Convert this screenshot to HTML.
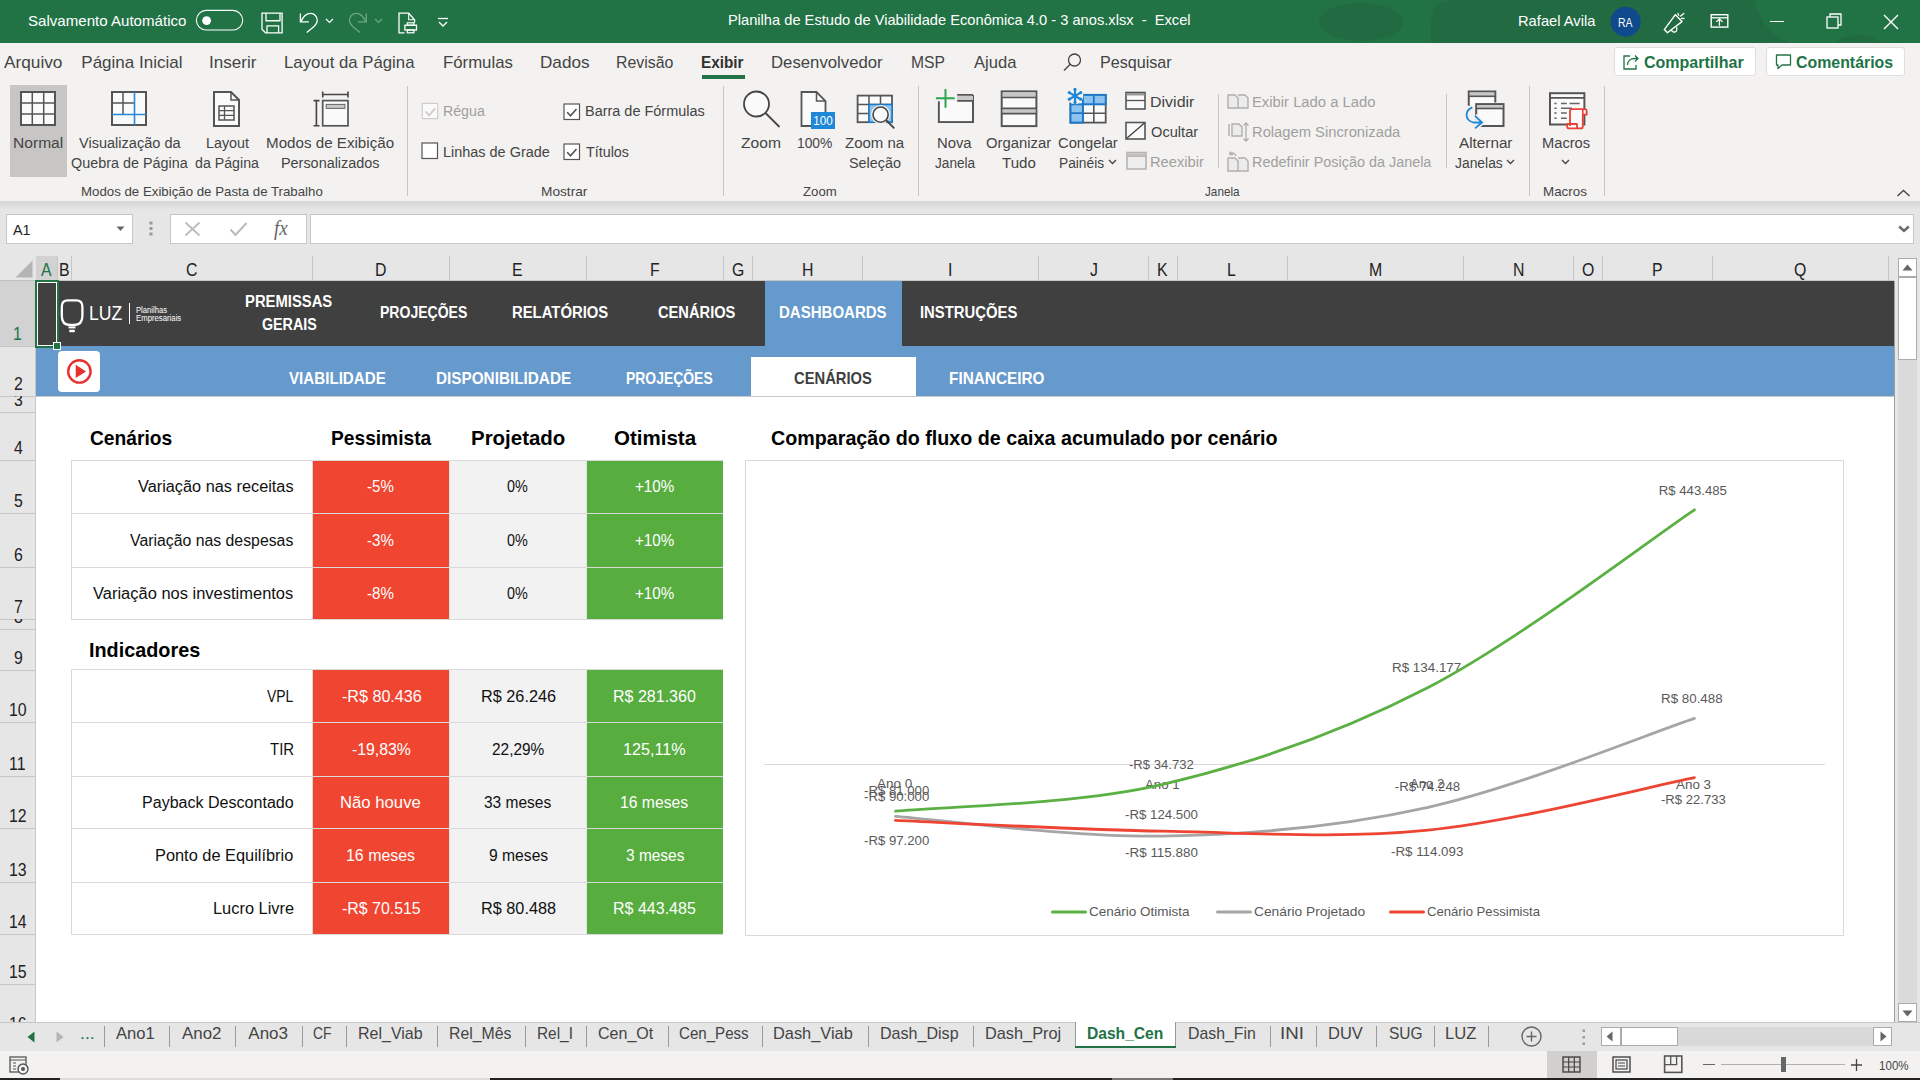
<!DOCTYPE html>
<html><head><meta charset="utf-8"><style>
html,body{margin:0;padding:0;width:1920px;height:1080px;overflow:hidden;background:#fff;}
body{position:relative;font-family:"Liberation Sans",sans-serif;}
.t{position:absolute;white-space:pre;transform-origin:0 0;}
svg{overflow:visible}
</style></head><body>
<div style="position:absolute;left:0px;top:0px;width:1920px;height:43px;background:#217346;"></div>
<svg style="position:absolute;left:0;top:0" width="1920" height="43"><g fill="#226a42"><ellipse cx="1361" cy="22" rx="42" ry="19"/><path d="M1431 43V22Q1431 0 1453 0H1755C1758 18 1768 34 1790 43z"/><ellipse cx="1858" cy="45" rx="22" ry="10"/></g></svg>
<svg style="position:absolute;left:195px;top:9px;" width="50" height="23" viewBox="0 0 50 23"><rect x="1.4" y="1.4" width="46.3" height="19.6" rx="9.8" fill="none" stroke="#fff" stroke-width="1.1"/><circle cx="11.6" cy="11.6" r="4.4" fill="#fff"/></svg>
<svg style="position:absolute;left:261px;top:12px;" width="24" height="24" viewBox="0 0 24 24"><path d="M1 1.2H21.1V20.8H4.5L1 17.3Z" fill="none" stroke="#fff" stroke-width="1.3"/><path d="M5 1.2V8.75H19V1.2M6 20.8V13.8H17.6V20.8" fill="none" stroke="#fff" stroke-width="1.3"/></svg>
<svg style="position:absolute;left:298px;top:12px;" width="24" height="24" viewBox="0 0 24 24"><path d="M2.4 1.4V9.9H10.8" fill="none" stroke="#fff" stroke-width="1.3"/><path d="M3 9.5C5.5 4 9 1.4 12.5 1.4C16.5 1.4 19.3 4.5 19.3 8.5C19.3 11 17.5 13 15.5 15L8.7 20.4" fill="none" stroke="#fff" stroke-width="1.3"/></svg>
<svg style="position:absolute;left:325px;top:17px;" width="10" height="8" viewBox="0 0 10 8"><path d="M1 2l3.5 3.5L8 2" fill="none" stroke="#fff" stroke-width="1.2"/></svg>
<svg style="position:absolute;left:347px;top:12px;" width="24" height="24" viewBox="0 0 24 24"><g opacity="0.35" transform="translate(21.7,0) scale(-1,1)"><path d="M2.4 1.4V9.9H10.8" fill="none" stroke="#fff" stroke-width="1.3"/><path d="M3 9.5C5.5 4 9 1.4 12.5 1.4C16.5 1.4 19.3 4.5 19.3 8.5C19.3 11 17.5 13 15.5 15L8.7 20.4" fill="none" stroke="#fff" stroke-width="1.3"/></g></svg>
<svg style="position:absolute;left:374px;top:17px;" width="10" height="8" viewBox="0 0 10 8"><path d="M1 2l3.5 3.5L8 2" fill="none" stroke="#fff" stroke-width="1.2" opacity="0.35"/></svg>
<svg style="position:absolute;left:397px;top:12px;" width="24" height="24" viewBox="0 0 24 24"><path d="M7.5 20.8H2V1.2H11.7L17.6 7.8V10.6" fill="none" stroke="#fff" stroke-width="1.3"/><path d="M11.7 1.2V7.8H17.6" fill="none" stroke="#fff" stroke-width="1.1"/><rect x="7.9" y="13.2" width="11.6" height="4.8" fill="#217346" stroke="#fff" stroke-width="1.3"/><rect x="10.3" y="10.8" width="6.6" height="2.4" fill="none" stroke="#fff" stroke-width="1.2"/><rect x="10.3" y="18" width="6.6" height="2.8" fill="none" stroke="#fff" stroke-width="1.2"/></svg>
<svg style="position:absolute;left:437px;top:17px;" width="12" height="12" viewBox="0 0 12 12"><path d="M1 1.5h10" stroke="#fff" stroke-width="1.3"/><path d="M2 5l4 4 4-4" fill="none" stroke="#fff" stroke-width="1.3"/></svg>
<svg style="position:absolute;left:1610px;top:6px;" width="32" height="32" viewBox="0 0 32 32"><circle cx="15.7" cy="15.7" r="15" fill="#0e4a8c"/></svg>
<svg style="position:absolute;left:1655px;top:5px;" width="36" height="32" viewBox="0 0 36 32"><path d="M9.3 24.6L20.4 9.7L27 16.6L12.4 27.7z" fill="none" stroke="#fff" stroke-width="1.4" stroke-linejoin="round"/><path d="M16.4 24.6C16.6 27 19.5 27.8 21.2 26.2C21.8 25.5 21.9 23.5 21.7 22.1" fill="none" stroke="#fff" stroke-width="1.3"/><path d="M23 8.4L23.7 10.4M25.7 11L28.8 8.4M26.3 13.3L29 13.5" stroke="#fff" stroke-width="1.3" stroke-linecap="round"/></svg>
<svg style="position:absolute;left:1705px;top:8px;" width="30" height="26" viewBox="0 0 30 26"><rect x="6.2" y="6.7" width="16.6" height="12.4" fill="none" stroke="#fff" stroke-width="1.4"/><path d="M6.2 9.8H22.8" stroke="#fff" stroke-width="1.3"/><path d="M14.4 17.8V10.9M11.3 13.9L14.4 10.8L17.5 13.9" fill="none" stroke="#fff" stroke-width="1.3"/></svg>
<div style="position:absolute;left:1770px;top:21px;width:14px;height:1.3px;background:#fff;"></div>
<svg style="position:absolute;left:1826px;top:13px;" width="18" height="18" viewBox="0 0 18 18"><rect x="1" y="4" width="11" height="11" fill="none" stroke="#fff" stroke-width="1.3"/><path d="M4 4V1h11v11h-3" fill="none" stroke="#fff" stroke-width="1.3"/></svg>
<svg style="position:absolute;left:1883px;top:14px;" width="16" height="16" viewBox="0 0 16 16"><path d="M1 1l14 14M15 1L1 15" stroke="#fff" stroke-width="1.4"/></svg>
<div style="position:absolute;left:0px;top:43px;width:1920px;height:158px;background:#f3f2f1;"></div>
<div style="position:absolute;left:0;top:201px;width:1920px;height:13px;background:linear-gradient(#d6d5d4,#e6e6e6 70%);"></div>
<div style="position:absolute;left:702px;top:75px;width:43px;height:3.6px;background:#217346;"></div>
<svg style="position:absolute;left:1062px;top:52px;" width="22" height="22" viewBox="0 0 22 22"><circle cx="12.5" cy="8" r="6" fill="none" stroke="#444" stroke-width="1.3"/><path d="M8.2 12.3L2 18.5" stroke="#444" stroke-width="1.4"/></svg>
<div style="position:absolute;left:1614px;top:47px;width:142px;height:29px;background:#fff;border:1px solid #e1dfdd;box-sizing:border-box;border-radius:3px;"></div>
<div style="position:absolute;left:1766px;top:47px;width:139px;height:29px;background:#fff;border:1px solid #e1dfdd;box-sizing:border-box;border-radius:3px;"></div>
<svg style="position:absolute;left:1621px;top:52px;" width="20" height="20" viewBox="0 0 20 20"><path d="M9 4H3v13h12v-4" fill="none" stroke="#217346" stroke-width="1.3"/><path d="M6.5 13c0-4 3-6.5 7.5-6.5H17M14 3.5l3 3-3 3" fill="none" stroke="#217346" stroke-width="1.3"/></svg>
<svg style="position:absolute;left:1775px;top:53px;" width="18" height="18" viewBox="0 0 18 18"><path d="M1.5 2h14v10H7l-4 3.5V12H1.5z" fill="none" stroke="#217346" stroke-width="1.3" stroke-linejoin="round"/></svg>
<div style="position:absolute;left:10px;top:85px;width:57px;height:92px;background:#c8c6c4;"></div>
<svg style="position:absolute;left:20px;top:91px;" width="37" height="36" viewBox="0 0 37 36"><rect x="1" y="1" width="34" height="33" fill="#fafafa" stroke="#555" stroke-width="2"/><path d="M12.3 1v33M23.7 1v33M1 12h34M1 23h34" stroke="#555" stroke-width="1.5"/></svg>
<svg style="position:absolute;left:111px;top:91px;" width="37" height="36" viewBox="0 0 37 36"><rect x="1" y="1" width="34" height="33" fill="#fafafa" stroke="#555" stroke-width="2"/><path d="M12 1v22M1 12h22" stroke="#555" stroke-width="1.5"/><path d="M23.5 1v33M1 23.5h34" stroke="#2b88d8" stroke-width="1.6"/></svg>
<svg style="position:absolute;left:213px;top:91px;" width="28" height="36" viewBox="0 0 28 36"><path d="M1 1h17l8 8v26H1z" fill="#fafafa" stroke="#555" stroke-width="2"/><path d="M18 1v8h8" fill="none" stroke="#555" stroke-width="1.5"/><rect x="6" y="15" width="15" height="14" fill="none" stroke="#555" stroke-width="1.5"/><path d="M6 19.7h15M6 24.3h15M11.5 15v14" stroke="#555" stroke-width="1.3"/></svg>
<svg style="position:absolute;left:310px;top:88px;" width="42" height="42" viewBox="0 0 42 42"><path d="M12.7 6.5H38M12.7 3.6V9.5M38 3.6V9.5" stroke="#444" stroke-width="1.6" fill="none"/><path d="M6.4 12.6V37.8M3.5 12.6H9.5M3.5 37.8H9.5" stroke="#444" stroke-width="1.6" fill="none"/><rect x="12.7" y="12.6" width="25.3" height="25.2" fill="#fafafa" stroke="#555" stroke-width="1.7"/><rect x="16.2" y="16.4" width="18.7" height="4" fill="#c8c8c8" stroke="#666" stroke-width="1"/></svg>
<div style="position:absolute;left:407px;top:86px;width:1px;height:110px;background:#c8c6c4;"></div>
<svg style="position:absolute;left:421px;top:102px;" width="18" height="18" viewBox="0 0 18 18"><rect x="1.3" y="1.4" width="15.4" height="15.2" fill="#fafafa" stroke="#cfcdcb" stroke-width="1.2"/><path d="M4.5 9.5L8 13.3L14.3 6.3" fill="none" stroke="#cfcdcb" stroke-width="1.9"/></svg>
<svg style="position:absolute;left:421px;top:142px;" width="18" height="18" viewBox="0 0 18 18"><rect x="1" y="1" width="15.5" height="15.5" fill="#fff" stroke="#555" stroke-width="1.2"/></svg>
<svg style="position:absolute;left:562.5px;top:102.5px;" width="18" height="18" viewBox="0 0 18 18"><rect x="1" y="1" width="15.5" height="15.5" fill="#fff" stroke="#555" stroke-width="1.2"/><path d="M4.2 9.2l3.3 3.6 6-6.8" fill="none" stroke="#555" stroke-width="1.7"/></svg>
<svg style="position:absolute;left:562.5px;top:142.5px;" width="18" height="18" viewBox="0 0 18 18"><rect x="1" y="1" width="15.5" height="15.5" fill="#fff" stroke="#555" stroke-width="1.2"/><path d="M4.2 9.2l3.3 3.6 6-6.8" fill="none" stroke="#555" stroke-width="1.7"/></svg>
<div style="position:absolute;left:723px;top:86px;width:1px;height:110px;background:#c8c6c4;"></div>
<svg style="position:absolute;left:742px;top:90px;" width="40" height="40" viewBox="0 0 40 40"><circle cx="14.5" cy="14" r="12.5" fill="#fafafa" stroke="#444" stroke-width="1.8"/><path d="M23.5 23l14 14" stroke="#444" stroke-width="1.8"/></svg>
<svg style="position:absolute;left:800px;top:91px;" width="38" height="40" viewBox="0 0 38 40"><path d="M1.5 1h15l9 9v25H1.5z" fill="#fafafa" stroke="#555" stroke-width="1.8"/><path d="M16.5 1v9h9" fill="none" stroke="#555" stroke-width="1.5"/><rect x="11" y="21" width="24" height="17" fill="#1e88d8"/><text x="23" y="34.5" font-family="Liberation Sans" font-size="13" fill="#fff" text-anchor="middle" transform="scale(0.9,1) translate(2.5,0)">100</text></svg>
<svg style="position:absolute;left:855px;top:93px;" width="44" height="40" viewBox="0 0 44 40"><rect x="2.6" y="2.6" width="34.4" height="26.6" fill="#fafafa" stroke="#555" stroke-width="1.8"/><path d="M14 2.6V29.2M25.5 2.6V11.5M2.6 11.5H37M2.6 20.5H14" stroke="#555" stroke-width="1.5"/><rect x="14" y="11.5" width="23" height="17.7" fill="#8cc4ef" stroke="#1e78c8" stroke-width="1.5"/><circle cx="25.6" cy="21.6" r="9.6" fill="#f3f2f1"/><circle cx="25.6" cy="21.6" r="7.6" fill="#fafafa" stroke="#444" stroke-width="1.6"/><path d="M31 27L39.3 35.4" stroke="#444" stroke-width="1.8"/></svg>
<div style="position:absolute;left:918px;top:86px;width:1px;height:110px;background:#c8c6c4;"></div>
<svg style="position:absolute;left:930px;top:85px;" width="46" height="40" viewBox="0 0 46 40"><path d="M8.9 16.3V37.1H43V9.9" fill="none" stroke="#555" stroke-width="2"/><rect x="9.9" y="15.8" width="32.1" height="20.3" fill="#fafafa"/><rect x="27.2" y="10.9" width="15.8" height="4.9" fill="#c8c8c8"/><path d="M27.2 9.9H43M27.2 15.8H43" stroke="#555" stroke-width="1.8"/><path d="M15.5 4V22.8M5.9 13.2H24.7" stroke="#2ea44f" stroke-width="2"/></svg>
<svg style="position:absolute;left:998px;top:88px;" width="42" height="40" viewBox="0 0 42 40"><rect x="3.7" y="3.4" width="34.7" height="34.7" fill="#fafafa" stroke="#555" stroke-width="2"/><rect x="4.7" y="4.4" width="32.7" height="5.1" fill="#c8c8c8"/><rect x="4.7" y="20.3" width="32.7" height="5.4" fill="#c8c8c8"/><path d="M3.7 9.5H38.4M3.7 20.3H38.4M3.7 25.7H38.4" stroke="#555" stroke-width="1.7"/></svg>
<svg style="position:absolute;left:1064px;top:86px;" width="46" height="40" viewBox="0 0 46 40"><rect x="6.5" y="8.9" width="35.2" height="27.7" fill="#fafafa" stroke="#555" stroke-width="1.8"/><path d="M29.8 8.9V36.6M18.9 18.3V36.6M6.5 27.2H41.7" stroke="#555" stroke-width="1.6"/><rect x="18.9" y="8.9" width="22.8" height="9.4" fill="#8cc4ef" stroke="#1e78c8" stroke-width="2"/><rect x="6.5" y="18.3" width="12.4" height="18.3" fill="#8cc4ef" stroke="#1e78c8" stroke-width="2"/><path d="M29.8 8.9V18.3M6.5 27.2H18.9" stroke="#1e78c8" stroke-width="1.8"/><circle cx="11" cy="9.9" r="8.3" fill="#f3f2f1"/><g stroke="#1e88d8" stroke-width="2.2" stroke-linecap="round"><path d="M11 3.3V16.5M5.3 6.6L16.7 13.2M16.7 6.6L5.3 13.2"/></g><g fill="#1e88d8"><circle cx="11" cy="3.3" r="1.6"/><circle cx="11" cy="16.5" r="1.6"/><circle cx="5.3" cy="6.6" r="1.6"/><circle cx="16.7" cy="13.2" r="1.6"/><circle cx="16.7" cy="6.6" r="1.6"/><circle cx="5.3" cy="13.2" r="1.6"/></g></svg>
<svg style="position:absolute;left:1125px;top:91px;" width="22" height="20" viewBox="0 0 22 20"><rect x="1" y="1.5" width="19" height="16.5" fill="#fafafa" stroke="#555" stroke-width="1.6"/><rect x="1.5" y="2" width="18" height="2.5" fill="#999"/><path d="M1 9.5h19" stroke="#555" stroke-width="1.3"/></svg>
<svg style="position:absolute;left:1125px;top:121px;" width="22" height="20" viewBox="0 0 22 20"><rect x="1" y="1.5" width="19" height="16.5" fill="#fafafa" stroke="#555" stroke-width="1.6"/><path d="M1.5 17.5L19.5 2" stroke="#444" stroke-width="1.4"/></svg>
<svg style="position:absolute;left:1126px;top:151px;" width="22" height="20" viewBox="0 0 22 20"><rect x="1" y="1.5" width="19" height="16.5" fill="#ededed" stroke="#b5b3b1" stroke-width="1.6"/><rect x="1.8" y="2.3" width="17.4" height="2.6" fill="#c4c2c0"/><path d="M1 5.3H20" stroke="#b5b3b1" stroke-width="1.2"/></svg>
<svg style="position:absolute;left:1108px;top:158px;" width="10" height="8" viewBox="0 0 10 8"><path d="M1 2l3.5 3.5L8 2" fill="none" stroke="#444" stroke-width="1.3"/></svg>
<div style="position:absolute;left:1218px;top:94px;width:1px;height:74px;background:#c8c6c4;"></div>
<svg style="position:absolute;left:1227px;top:93px;" width="24" height="16" viewBox="0 0 24 16"><path d="M1 2h7l3 3v10H1zM11 2h7l3 3v10H11" fill="#ececec" stroke="#b0aeac" stroke-width="1.4"/></svg>
<svg style="position:absolute;left:1227px;top:121px;" width="24" height="22" viewBox="0 0 24 22"><path d="M2 3v12M5 3h7l3 3v9H5z" fill="#ececec" stroke="#b0aeac" stroke-width="1.4"/><path d="M19 2v18M16.5 4.5L19 2l2.5 2.5M16.5 17.5L19 20l2.5-2.5" fill="none" stroke="#b0aeac" stroke-width="1.3"/></svg>
<svg style="position:absolute;left:1227px;top:150px;" width="24" height="22" viewBox="0 0 24 22"><path d="M1 8h7l3 3v10H1zM11 8h7l3 3v10H11" fill="#ececec" stroke="#b0aeac" stroke-width="1.4"/><path d="M9 6c-1-3-4-4-6-2M3 1.5v3h3" fill="none" stroke="#b0aeac" stroke-width="1.3"/></svg>
<div style="position:absolute;left:1446px;top:94px;width:1px;height:74px;background:#c8c6c4;"></div>
<svg style="position:absolute;left:1460px;top:88px;" width="50" height="45" viewBox="0 0 50 45"><path d="M8.75 17.7V3.6H35.3V14.6" fill="#fafafa" stroke="#555" stroke-width="2"/><rect x="9.75" y="4.6" width="24.5" height="3.7" fill="#c8c8c8"/><path d="M8.75 8.3H35.3" stroke="#555" stroke-width="1.6"/><rect x="16.2" y="16.1" width="27.3" height="21.9" fill="#fafafa" stroke="#555" stroke-width="2"/><rect x="17.2" y="17.1" width="25.3" height="3.4" fill="#c8c8c8"/><path d="M16.2 20.5H43.5" stroke="#555" stroke-width="1.6"/><path d="M12.3 19.3C5 22 4 32 13.4 34.5H22M15 27.9L22 34.5L15 40.4" fill="none" stroke="#f3f2f1" stroke-width="5"/><path d="M12.3 19.3C5 22 4 32 13.4 34.5H22M15 27.9L22 34.5L15 40.4" fill="none" stroke="#1e88d8" stroke-width="1.8"/></svg>
<svg style="position:absolute;left:1506px;top:158px;" width="10" height="8" viewBox="0 0 10 8"><path d="M1 2l3.5 3.5L8 2" fill="none" stroke="#444" stroke-width="1.3"/></svg>
<div style="position:absolute;left:1529px;top:86px;width:1px;height:110px;background:#c8c6c4;"></div>
<svg style="position:absolute;left:1545px;top:88px;" width="46" height="44" viewBox="0 0 46 44"><rect x="5" y="5.2" width="34.4" height="31.3" fill="#fafafa" stroke="#555" stroke-width="2"/><path d="M5 9.9H39.4" stroke="#555" stroke-width="1.8"/><g stroke="#666" stroke-width="1.5"><path d="M9.3 15.4H11.6M16 15.4H21.8M24.5 15.4H34.7M9.3 20.2H11.6M16 20.2H27M9.3 25.1H11.6M16 25.1H21.8M9.3 30.2H11.6M16 30.2H21.8"/></g><path d="M25 38V23.2Q25 21.2 27 21.2H39.7Q41.7 21.2 41.7 23.2V26.7H37.8V38.4Q37.8 40.4 35.8 40.4H24.2Q22.2 40.4 22.2 38.4V36H32V40.4" fill="#fafafa" stroke="#e8403a" stroke-width="1.8" stroke-linejoin="round"/><path d="M37.8 21.2V26.7" stroke="#e8403a" stroke-width="1.6"/></svg>
<svg style="position:absolute;left:1561px;top:158px;" width="10" height="8" viewBox="0 0 10 8"><path d="M1 2l3.5 3.5L8 2" fill="none" stroke="#444" stroke-width="1.3"/></svg>
<div style="position:absolute;left:1604px;top:86px;width:1px;height:110px;background:#c8c6c4;"></div>
<svg style="position:absolute;left:1896px;top:188px;" width="16" height="10" viewBox="0 0 16 10"><path d="M1.5 8l6-5.5 6 5.5" fill="none" stroke="#444" stroke-width="1.3"/></svg>
<div style="position:absolute;left:0px;top:214px;width:1920px;height:67px;background:#e6e6e6;"></div>
<div style="position:absolute;left:6px;top:214px;width:127px;height:30px;background:#fff;border:1px solid #c6c6c6;box-sizing:border-box;"></div>
<svg style="position:absolute;left:116px;top:226px;" width="10" height="6" viewBox="0 0 10 6"><path d="M0.5 0.5h8l-4 4.5z" fill="#666"/></svg>
<svg style="position:absolute;left:149px;top:221px;" width="5" height="16" viewBox="0 0 5 16"><rect x="0.5" y="0.5" width="3" height="3" fill="#999"/><rect x="0.5" y="6" width="3" height="3" fill="#999"/><rect x="0.5" y="11.5" width="3" height="3" fill="#999"/></svg>
<div style="position:absolute;left:170px;top:214px;width:137px;height:30px;background:#fff;border:1px solid #c6c6c6;box-sizing:border-box;"></div>
<svg style="position:absolute;left:184px;top:221px;" width="18" height="16" viewBox="0 0 18 16"><path d="M1.5 1.5l14 13M15.5 1.5l-14 13" stroke="#bbb" stroke-width="1.8"/></svg>
<svg style="position:absolute;left:229px;top:221px;" width="19" height="16" viewBox="0 0 19 16"><path d="M1.5 8.5l5 5.5L17.5 2" fill="none" stroke="#bbb" stroke-width="2"/></svg>
<div style="position:absolute;left:274px;top:216px;font-family:'Liberation Serif',serif;font-style:italic;font-size:20px;line-height:24px;color:#666;transform:scaleX(0.95);transform-origin:0 0;">fx</div>
<div style="position:absolute;left:310px;top:214px;width:1604px;height:30px;background:#fff;border:1px solid #c6c6c6;box-sizing:border-box;"></div>
<svg style="position:absolute;left:1897px;top:224px;" width="14" height="10" viewBox="0 0 14 10"><path d="M2.2 2.5l4.8 4.3 4.8-4.3" fill="none" stroke="#666" stroke-width="2.4"/></svg>
<div style="position:absolute;left:36px;top:256px;width:22px;height:25px;background:#d2d2d2;"></div>
<svg style="position:absolute;left:14px;top:259px;" width="20" height="20" viewBox="0 0 20 20"><path d="M18.5 1.5V18.5H1.5z" fill="#b4b4b4"/></svg>
<div style="position:absolute;left:57px;top:256px;width:1px;height:25px;background:#c6c6c6;"></div>
<div style="position:absolute;left:71px;top:256px;width:1px;height:25px;background:#c6c6c6;"></div>
<div style="position:absolute;left:312px;top:256px;width:1px;height:25px;background:#c6c6c6;"></div>
<div style="position:absolute;left:449px;top:256px;width:1px;height:25px;background:#c6c6c6;"></div>
<div style="position:absolute;left:586px;top:256px;width:1px;height:25px;background:#c6c6c6;"></div>
<div style="position:absolute;left:723px;top:256px;width:1px;height:25px;background:#c6c6c6;"></div>
<div style="position:absolute;left:752px;top:256px;width:1px;height:25px;background:#c6c6c6;"></div>
<div style="position:absolute;left:862px;top:256px;width:1px;height:25px;background:#c6c6c6;"></div>
<div style="position:absolute;left:1038px;top:256px;width:1px;height:25px;background:#c6c6c6;"></div>
<div style="position:absolute;left:1148px;top:256px;width:1px;height:25px;background:#c6c6c6;"></div>
<div style="position:absolute;left:1177px;top:256px;width:1px;height:25px;background:#c6c6c6;"></div>
<div style="position:absolute;left:1287px;top:256px;width:1px;height:25px;background:#c6c6c6;"></div>
<div style="position:absolute;left:1463px;top:256px;width:1px;height:25px;background:#c6c6c6;"></div>
<div style="position:absolute;left:1573px;top:256px;width:1px;height:25px;background:#c6c6c6;"></div>
<div style="position:absolute;left:1602px;top:256px;width:1px;height:25px;background:#c6c6c6;"></div>
<div style="position:absolute;left:1712px;top:256px;width:1px;height:25px;background:#c6c6c6;"></div>
<div style="position:absolute;left:1888px;top:256px;width:1px;height:25px;background:#c6c6c6;"></div>
<div style="position:absolute;left:36px;top:280px;width:1858px;height:1px;background:#c6c6c6;"></div>
<div style="position:absolute;left:0px;top:256px;width:36px;height:1px;background:#e6e6e6;"></div>
<div style="position:absolute;left:0px;top:281px;width:36px;height:741px;background:#e6e6e6;"></div>
<div style="position:absolute;left:0px;top:281px;width:36px;height:65px;background:#d2d2d2;"></div>
<div style="position:absolute;left:0px;top:346px;width:36px;height:1px;background:#c6c6c6;"></div>
<div style="position:absolute;left:0px;top:396px;width:36px;height:1px;background:#c6c6c6;"></div>
<div style="position:absolute;left:0px;top:412px;width:36px;height:1px;background:#c6c6c6;"></div>
<div style="position:absolute;left:0px;top:460px;width:36px;height:1px;background:#c6c6c6;"></div>
<div style="position:absolute;left:0px;top:513px;width:36px;height:1px;background:#c6c6c6;"></div>
<div style="position:absolute;left:0px;top:567px;width:36px;height:1px;background:#c6c6c6;"></div>
<div style="position:absolute;left:0px;top:619px;width:36px;height:1px;background:#c6c6c6;"></div>
<div style="position:absolute;left:0px;top:629px;width:36px;height:1px;background:#c6c6c6;"></div>
<div style="position:absolute;left:0px;top:670px;width:36px;height:1px;background:#c6c6c6;"></div>
<div style="position:absolute;left:0px;top:722px;width:36px;height:1px;background:#c6c6c6;"></div>
<div style="position:absolute;left:0px;top:776px;width:36px;height:1px;background:#c6c6c6;"></div>
<div style="position:absolute;left:0px;top:828px;width:36px;height:1px;background:#c6c6c6;"></div>
<div style="position:absolute;left:0px;top:882px;width:36px;height:1px;background:#c6c6c6;"></div>
<div style="position:absolute;left:0px;top:934px;width:36px;height:1px;background:#c6c6c6;"></div>
<div style="position:absolute;left:0px;top:984px;width:36px;height:1px;background:#c6c6c6;"></div>
<div style="position:absolute;left:35px;top:281px;width:1px;height:741px;background:#c6c6c6;"></div>
<div style="position:absolute;left:0px;top:280px;width:36px;height:1px;background:#c0c0c0;"></div>
<div style="position:absolute;left:36px;top:281px;width:1858px;height:741px;background:#ffffff;"></div>
<div style="position:absolute;left:36px;top:281px;width:1858px;height:65px;background:#404040;"></div>
<div style="position:absolute;left:765px;top:281px;width:137px;height:65px;background:#6699cc;"></div>
<div style="position:absolute;left:36px;top:346px;width:1858px;height:50px;background:#6699cc;"></div>
<div style="position:absolute;left:36px;top:396px;width:1858px;height:1px;background:#c8c8c8;"></div>
<div style="position:absolute;left:751px;top:357px;width:165px;height:39px;background:#ffffff;"></div>
<div style="position:absolute;left:1894px;top:281px;width:1px;height:741px;background:#a0a0a0;"></div>
<div style="position:absolute;left:0px;top:1022px;width:1920px;height:1px;background:#c6c6c6;"></div>
<div style="position:absolute;left:35px;top:280px;width:24px;height:68px;border:2px solid #217346;box-sizing:border-box;"></div><div style="position:absolute;left:37px;top:282px;width:20px;height:64px;border:1px solid #fff;box-sizing:border-box;"></div>
<div style="position:absolute;left:54px;top:343px;width:6px;height:6px;background:#217346;outline:1px solid #fff;"></div>
<svg style="position:absolute;left:58px;top:296px;" width="30" height="40" viewBox="0 0 30 40"><path d="M18 4.3H10Q3.8 4.3 3.8 10.5V20Q3.8 29 12 29H16Q24.4 29 24.4 20V10.5Q24.4 4.3 18 4.3z" fill="none" stroke="#fff" stroke-width="2.3"/><path d="M10.5 31.4H17.5" stroke="#fff" stroke-width="2"/><path d="M12.3 35H15.8" stroke="#fff" stroke-width="2.4" stroke-linecap="round"/></svg>
<div style="position:absolute;left:129px;top:303px;width:1px;height:21px;background:#ffffff;"></div>
<div style="position:absolute;left:58px;top:351px;width:42px;height:41px;background:#ffffff;border-radius:4px;"></div>
<svg style="position:absolute;left:64px;top:357px;" width="30" height="30" viewBox="0 0 30 30"><circle cx="15.4" cy="14.4" r="11.2" fill="none" stroke="#e8312f" stroke-width="2.4"/><path d="M11.75 7.8V21L22 14.4z" fill="#e8312f"/></svg>
<div style="position:absolute;left:71px;top:460px;width:242px;height:159px;background:#fff;"></div>
<div style="position:absolute;left:313px;top:460px;width:136px;height:159px;background:#ef4531;"></div>
<div style="position:absolute;left:449px;top:460px;width:138px;height:159px;background:#f2f2f2;"></div>
<div style="position:absolute;left:587px;top:460px;width:136px;height:159px;background:#58ad3f;"></div>
<div style="position:absolute;left:71px;top:460px;width:652px;height:1px;background:#d9d9d9;"></div>
<div style="position:absolute;left:71px;top:513px;width:652px;height:1px;background:#d9d9d9;"></div>
<div style="position:absolute;left:71px;top:567px;width:652px;height:1px;background:#d9d9d9;"></div>
<div style="position:absolute;left:71px;top:619px;width:652px;height:1px;background:#d9d9d9;"></div>
<div style="position:absolute;left:71px;top:460px;width:1px;height:160px;background:#d9d9d9;"></div>
<div style="position:absolute;left:312px;top:460px;width:1px;height:159px;background:#d9d9d9;"></div>
<div style="position:absolute;left:449px;top:460px;width:1px;height:159px;background:#e4e4e4;"></div>
<div style="position:absolute;left:586px;top:460px;width:1px;height:159px;background:#e4e4e4;"></div>
<div style="position:absolute;left:71px;top:669px;width:242px;height:265px;background:#fff;"></div>
<div style="position:absolute;left:313px;top:669px;width:136px;height:265px;background:#ef4531;"></div>
<div style="position:absolute;left:449px;top:669px;width:138px;height:265px;background:#f2f2f2;"></div>
<div style="position:absolute;left:587px;top:669px;width:136px;height:265px;background:#58ad3f;"></div>
<div style="position:absolute;left:71px;top:669px;width:652px;height:1px;background:#d9d9d9;"></div>
<div style="position:absolute;left:71px;top:722px;width:652px;height:1px;background:#d9d9d9;"></div>
<div style="position:absolute;left:71px;top:776px;width:652px;height:1px;background:#d9d9d9;"></div>
<div style="position:absolute;left:71px;top:828px;width:652px;height:1px;background:#d9d9d9;"></div>
<div style="position:absolute;left:71px;top:882px;width:652px;height:1px;background:#d9d9d9;"></div>
<div style="position:absolute;left:71px;top:934px;width:652px;height:1px;background:#d9d9d9;"></div>
<div style="position:absolute;left:71px;top:669px;width:1px;height:266px;background:#d9d9d9;"></div>
<div style="position:absolute;left:312px;top:669px;width:1px;height:265px;background:#d9d9d9;"></div>
<div style="position:absolute;left:449px;top:669px;width:1px;height:265px;background:#e4e4e4;"></div>
<div style="position:absolute;left:586px;top:669px;width:1px;height:265px;background:#e4e4e4;"></div>
<div style="position:absolute;left:745px;top:460px;width:1099px;height:476px;background:#fff;border:1px solid #d9d9d9;box-sizing:border-box;"></div>
<div style="position:absolute;left:764px;top:764px;width:1061px;height:1px;background:#d9d9d9;"></div>
<svg style="position:absolute;left:1050px;top:909px;" width="40" height="6" viewBox="0 0 40 6"><path d="M2.5 3h33" stroke="#5bb043" stroke-width="3" stroke-linecap="round"/></svg>
<svg style="position:absolute;left:1215px;top:909px;" width="40" height="6" viewBox="0 0 40 6"><path d="M2.5 3h33" stroke="#a5a5a5" stroke-width="3" stroke-linecap="round"/></svg>
<svg style="position:absolute;left:1388px;top:909px;" width="40" height="6" viewBox="0 0 40 6"><path d="M2.5 3h33" stroke="#ee4433" stroke-width="3" stroke-linecap="round"/></svg>
<div style="position:absolute;left:1895px;top:256px;width:25px;height:766px;background:#e6e6e6;"></div>
<div style="position:absolute;left:1898px;top:258px;width:19px;height:19px;background:#fff;border:1px solid #ababab;box-sizing:border-box;"></div>
<svg style="position:absolute;left:1902px;top:264px;" width="11" height="7" viewBox="0 0 11 7"><path d="M0.5 6.5L5.5 0.5l5 6z" fill="#666"/></svg>
<div style="position:absolute;left:1898px;top:277px;width:19px;height:83px;background:#fff;border:1px solid #ababab;box-sizing:border-box;"></div>
<div style="position:absolute;left:1898px;top:360px;width:19px;height:643px;background:#dadada;"></div>
<div style="position:absolute;left:1898px;top:1003px;width:19px;height:19px;background:#fff;border:1px solid #ababab;box-sizing:border-box;"></div>
<svg style="position:absolute;left:1902px;top:1010px;" width="11" height="7" viewBox="0 0 11 7"><path d="M0.5 0.5h10l-5 6z" fill="#666"/></svg>
<div style="position:absolute;left:0px;top:1023px;width:1920px;height:28px;background:#e6e6e6;"></div>
<svg style="position:absolute;left:26px;top:1030px;" width="10" height="14" viewBox="0 0 10 14"><path d="M8.5 1.5v11L1.5 7z" fill="#217346"/></svg>
<svg style="position:absolute;left:55px;top:1030px;" width="10" height="14" viewBox="0 0 10 14"><path d="M1.5 1.5v11L8.5 7z" fill="#b5b5b5"/></svg>
<div style="position:absolute;left:104px;top:1026px;width:1px;height:21px;background:#9a9a9a;"></div>
<div style="position:absolute;left:169px;top:1026px;width:1px;height:21px;background:#9a9a9a;"></div>
<div style="position:absolute;left:235px;top:1026px;width:1px;height:21px;background:#9a9a9a;"></div>
<div style="position:absolute;left:302px;top:1026px;width:1px;height:21px;background:#9a9a9a;"></div>
<div style="position:absolute;left:346px;top:1026px;width:1px;height:21px;background:#9a9a9a;"></div>
<div style="position:absolute;left:437px;top:1026px;width:1px;height:21px;background:#9a9a9a;"></div>
<div style="position:absolute;left:525px;top:1026px;width:1px;height:21px;background:#9a9a9a;"></div>
<div style="position:absolute;left:586px;top:1026px;width:1px;height:21px;background:#9a9a9a;"></div>
<div style="position:absolute;left:668px;top:1026px;width:1px;height:21px;background:#9a9a9a;"></div>
<div style="position:absolute;left:762px;top:1026px;width:1px;height:21px;background:#9a9a9a;"></div>
<div style="position:absolute;left:868px;top:1026px;width:1px;height:21px;background:#9a9a9a;"></div>
<div style="position:absolute;left:973px;top:1026px;width:1px;height:21px;background:#9a9a9a;"></div>
<div style="position:absolute;left:1270px;top:1026px;width:1px;height:21px;background:#9a9a9a;"></div>
<div style="position:absolute;left:1316px;top:1026px;width:1px;height:21px;background:#9a9a9a;"></div>
<div style="position:absolute;left:1376px;top:1026px;width:1px;height:21px;background:#9a9a9a;"></div>
<div style="position:absolute;left:1434px;top:1026px;width:1px;height:21px;background:#9a9a9a;"></div>
<div style="position:absolute;left:1488px;top:1026px;width:1px;height:21px;background:#9a9a9a;"></div>
<div style="position:absolute;left:1075px;top:1022px;width:101px;height:26px;background:#ffffff;border-left:1px solid #9a9a9a;border-right:1px solid #9a9a9a;box-sizing:border-box;"></div>
<div style="position:absolute;left:1075px;top:1046px;width:101px;height:2.2px;background:#217346;"></div>
<svg style="position:absolute;left:1521px;top:1026px;" width="22" height="22" viewBox="0 0 22 22"><circle cx="10.5" cy="10.5" r="9.5" fill="none" stroke="#666" stroke-width="1.4"/><path d="M10.5 5.5v10M5.5 10.5h10" stroke="#666" stroke-width="1.4"/></svg>
<svg style="position:absolute;left:1582px;top:1029px;" width="4" height="18" viewBox="0 0 4 18"><rect x="0.5" y="0.5" width="2.5" height="2.5" fill="#999"/><rect x="0.5" y="7" width="2.5" height="2.5" fill="#999"/><rect x="0.5" y="13.5" width="2.5" height="2.5" fill="#999"/></svg>
<div style="position:absolute;left:1601px;top:1027px;width:291px;height:19px;background:#d9d9d9;"></div>
<div style="position:absolute;left:1601px;top:1027px;width:20px;height:19px;background:#fff;border:1px solid #ababab;box-sizing:border-box;"></div>
<svg style="position:absolute;left:1606px;top:1031px;" width="8" height="11" viewBox="0 0 8 11"><path d="M6.5 0.5v10L0.5 5.5z" fill="#666"/></svg>
<div style="position:absolute;left:1621px;top:1027px;width:57px;height:19px;background:#fff;border:1px solid #ababab;box-sizing:border-box;"></div>
<div style="position:absolute;left:1873px;top:1027px;width:19px;height:19px;background:#fff;border:1px solid #ababab;box-sizing:border-box;"></div>
<svg style="position:absolute;left:1880px;top:1031px;" width="8" height="11" viewBox="0 0 8 11"><path d="M0.5 0.5v10l6-5z" fill="#666"/></svg>
<div style="position:absolute;left:0px;top:1051px;width:1920px;height:29px;background:#f3f2f1;"></div>
<svg style="position:absolute;left:9px;top:1056px;" width="22" height="20" viewBox="0 0 22 20"><rect x="1" y="1" width="16" height="15" fill="none" stroke="#555" stroke-width="1.3"/><path d="M1 4h16M4 7h3M4 10h3M4 13h3" stroke="#555" stroke-width="1.2"/><circle cx="14" cy="13" r="5" fill="#f3f2f1" stroke="#555" stroke-width="1.4"/><circle cx="14" cy="13" r="2" fill="#555"/></svg>
<div style="position:absolute;left:1547px;top:1051px;width:50px;height:27px;background:#d2d0ce;"></div>
<svg style="position:absolute;left:1562px;top:1056px;" width="20" height="18" viewBox="0 0 20 18"><rect x="1" y="1" width="17" height="15" fill="none" stroke="#444" stroke-width="1.4"/><path d="M1 6h17M1 11h17M6.7 1v15M12.3 1v15" stroke="#444" stroke-width="1.2"/></svg>
<svg style="position:absolute;left:1612px;top:1056px;" width="20" height="18" viewBox="0 0 20 18"><rect x="1" y="1" width="17" height="15" fill="none" stroke="#444" stroke-width="1.4"/><rect x="4" y="4" width="11" height="9" fill="none" stroke="#444" stroke-width="1.2"/><path d="M6 7h7M6 10h7" stroke="#444" stroke-width="1"/></svg>
<svg style="position:absolute;left:1662px;top:1054px;" width="22" height="22" viewBox="0 0 22 22"><rect x="2.6" y="2" width="17.2" height="16.4" fill="none" stroke="#555" stroke-width="1.6"/><path d="M2.6 10.6H14.6V2M8.7 2V10.6" fill="none" stroke="#555" stroke-width="1.3"/></svg>
<div style="position:absolute;left:1703px;top:1064px;width:12px;height:1px;background:#666;"></div>
<div style="position:absolute;left:1721px;top:1064px;width:124px;height:1px;background:#b0b0b0;"></div>
<div style="position:absolute;left:1781px;top:1057px;width:5px;height:15px;background:#666;"></div>
<svg style="position:absolute;left:1850px;top:1058px;" width="14" height="14" viewBox="0 0 14 14"><path d="M6.5 1v12M1 7h11" stroke="#444" stroke-width="1.3"/></svg>
<div style="position:absolute;left:0px;top:1078px;width:60px;height:2px;background:#222;"></div>
<div style="position:absolute;left:60px;top:1078px;width:430px;height:2px;background:#ddd;"></div>
<div style="position:absolute;left:490px;top:1078px;width:622px;height:2px;background:#222;"></div>
<div style="position:absolute;left:1112px;top:1078px;width:61px;height:2px;background:#777;"></div>
<div style="position:absolute;left:1173px;top:1078px;width:747px;height:2px;background:#222;"></div>
<div class="t" style="left:28.00px;top:13.67px;font-size:14.8px;line-height:14.8px;font-weight:400;color:#ffffff;transform:scaleX(1.0190);">Salvamento Automático</div>
<div class="t" style="left:727.71px;top:12.87px;font-size:14.8px;line-height:14.8px;font-weight:400;color:#ffffff;transform:scaleX(0.9907);">Planilha de Estudo de Viabilidade Econômica 4.0 - 3 anos.xlsx  -  Excel</div>
<div class="t" style="left:1518.01px;top:14.07px;font-size:14.8px;line-height:14.8px;font-weight:400;color:#ffffff;transform:scaleX(0.9942);">Rafael Avila</div>
<div class="t" style="left:1618.19px;top:15.60px;font-size:13px;line-height:13px;font-weight:400;color:#ffffff;transform:scaleX(0.8051);">RA</div>
<div class="t" style="left:4.30px;top:53.71px;font-size:17px;line-height:17px;font-weight:400;color:#444444;transform:scaleX(1.0142);">Arquivo</div>
<div class="t" style="left:81.30px;top:53.71px;font-size:17px;line-height:17px;font-weight:400;color:#444444;">Página Inicial</div>
<div class="t" style="left:209.00px;top:53.71px;font-size:17px;line-height:17px;font-weight:400;color:#444444;transform:scaleX(1.0028);">Inserir</div>
<div class="t" style="left:284.01px;top:53.71px;font-size:17px;line-height:17px;font-weight:400;color:#444444;transform:scaleX(0.9858);">Layout da Página</div>
<div class="t" style="left:443.31px;top:53.71px;font-size:17px;line-height:17px;font-weight:400;color:#444444;transform:scaleX(0.9863);">Fórmulas</div>
<div class="t" style="left:539.99px;top:53.71px;font-size:17px;line-height:17px;font-weight:400;color:#444444;transform:scaleX(1.0075);">Dados</div>
<div class="t" style="left:616.37px;top:53.71px;font-size:17px;line-height:17px;font-weight:400;color:#444444;transform:scaleX(0.9339);">Revisão</div>
<div class="t" style="left:771.32px;top:53.71px;font-size:17px;line-height:17px;font-weight:400;color:#444444;transform:scaleX(0.9846);">Desenvolvedor</div>
<div class="t" style="left:911.38px;top:53.71px;font-size:17px;line-height:17px;font-weight:400;color:#444444;transform:scaleX(0.9211);">MSP</div>
<div class="t" style="left:974.30px;top:53.71px;font-size:17px;line-height:17px;font-weight:400;color:#444444;transform:scaleX(0.9767);">Ajuda</div>
<div class="t" style="left:1099.75px;top:53.71px;font-size:17px;line-height:17px;font-weight:400;color:#444444;transform:scaleX(0.9475);">Pesquisar</div>
<div class="t" style="left:701.40px;top:53.71px;font-size:17px;line-height:17px;font-weight:700;color:#323130;transform:scaleX(0.9008);">Exibir</div>
<div class="t" style="left:1644.30px;top:53.61px;font-size:17px;line-height:17px;font-weight:700;color:#217346;transform:scaleX(0.9418);">Compartilhar</div>
<div class="t" style="left:1796.00px;top:53.61px;font-size:17px;line-height:17px;font-weight:700;color:#217346;transform:scaleX(0.9347);">Comentários</div>
<div class="t" style="left:12.59px;top:135.48px;font-size:15.5px;line-height:15.5px;font-weight:400;color:#444444;transform:scaleX(1.0060);">Normal</div>
<div class="t" style="left:78.60px;top:135.48px;font-size:15.5px;line-height:15.5px;font-weight:400;color:#444444;transform:scaleX(0.9377);">Visualização da</div>
<div class="t" style="left:70.50px;top:155.48px;font-size:15.5px;line-height:15.5px;font-weight:400;color:#444444;transform:scaleX(0.9271);">Quebra de Página</div>
<div class="t" style="left:205.88px;top:135.48px;font-size:15.5px;line-height:15.5px;font-weight:400;color:#444444;transform:scaleX(0.9236);">Layout</div>
<div class="t" style="left:195.40px;top:155.48px;font-size:15.5px;line-height:15.5px;font-weight:400;color:#444444;transform:scaleX(0.9161);">da Página</div>
<div class="t" style="left:266.42px;top:135.48px;font-size:15.5px;line-height:15.5px;font-weight:400;color:#444444;transform:scaleX(0.9780);">Modos de Exibição</div>
<div class="t" style="left:281.37px;top:155.48px;font-size:15.5px;line-height:15.5px;font-weight:400;color:#444444;transform:scaleX(0.9294);">Personalizados</div>
<div class="t" style="left:80.99px;top:184.73px;font-size:13.2px;line-height:13.2px;font-weight:400;color:#444444;transform:scaleX(1.0056);">Modos de Exibição de Pasta de Trabalho</div>
<div class="t" style="left:443.39px;top:103.48px;font-size:15.5px;line-height:15.5px;font-weight:400;color:#a19f9d;transform:scaleX(0.9144);">Régua</div>
<div class="t" style="left:584.67px;top:103.48px;font-size:15.5px;line-height:15.5px;font-weight:400;color:#444444;transform:scaleX(0.9326);">Barra de Fórmulas</div>
<div class="t" style="left:443.37px;top:144.18px;font-size:15.5px;line-height:15.5px;font-weight:400;color:#444444;transform:scaleX(0.9320);">Linhas de Grade</div>
<div class="t" style="left:585.60px;top:144.18px;font-size:15.5px;line-height:15.5px;font-weight:400;color:#444444;transform:scaleX(0.9238);">Títulos</div>
<div class="t" style="left:540.66px;top:185.23px;font-size:13.2px;line-height:13.2px;font-weight:400;color:#444444;transform:scaleX(1.0383);">Mostrar</div>
<div class="t" style="left:741.00px;top:135.28px;font-size:15.5px;line-height:15.5px;font-weight:400;color:#444444;transform:scaleX(1.0075);">Zoom</div>
<div class="t" style="left:797.11px;top:135.28px;font-size:15.5px;line-height:15.5px;font-weight:400;color:#444444;transform:scaleX(0.8904);">100%</div>
<div class="t" style="left:845.00px;top:135.28px;font-size:15.5px;line-height:15.5px;font-weight:400;color:#444444;transform:scaleX(0.9667);">Zoom na</div>
<div class="t" style="left:849.40px;top:154.98px;font-size:15.5px;line-height:15.5px;font-weight:400;color:#444444;transform:scaleX(0.9279);">Seleção</div>
<div class="t" style="left:803.00px;top:185.23px;font-size:13.2px;line-height:13.2px;font-weight:400;color:#444444;">Zoom</div>
<div class="t" style="left:937.34px;top:135.28px;font-size:15.5px;line-height:15.5px;font-weight:400;color:#444444;transform:scaleX(0.9560);">Nova</div>
<div class="t" style="left:935.00px;top:154.98px;font-size:15.5px;line-height:15.5px;font-weight:400;color:#444444;transform:scaleX(0.8794);">Janela</div>
<div class="t" style="left:986.00px;top:135.28px;font-size:15.5px;line-height:15.5px;font-weight:400;color:#444444;transform:scaleX(0.9574);">Organizar</div>
<div class="t" style="left:1002.30px;top:154.98px;font-size:15.5px;line-height:15.5px;font-weight:400;color:#444444;transform:scaleX(0.9727);">Tudo</div>
<div class="t" style="left:1058.40px;top:135.28px;font-size:15.5px;line-height:15.5px;font-weight:400;color:#444444;transform:scaleX(0.9500);">Congelar</div>
<div class="t" style="left:1058.71px;top:154.98px;font-size:15.5px;line-height:15.5px;font-weight:400;color:#444444;transform:scaleX(0.8865);">Painéis</div>
<div class="t" style="left:1149.77px;top:94.48px;font-size:15.5px;line-height:15.5px;font-weight:400;color:#444444;transform:scaleX(1.0312);">Dividir</div>
<div class="t" style="left:1151.00px;top:124.48px;font-size:15.5px;line-height:15.5px;font-weight:400;color:#444444;transform:scaleX(0.9438);">Ocultar</div>
<div class="t" style="left:1150.05px;top:154.28px;font-size:15.5px;line-height:15.5px;font-weight:400;color:#a19f9d;transform:scaleX(0.9481);">Reexibir</div>
<div class="t" style="left:1251.64px;top:94.48px;font-size:15.5px;line-height:15.5px;font-weight:400;color:#a19f9d;transform:scaleX(0.9550);">Exibir Lado a Lado</div>
<div class="t" style="left:1251.65px;top:124.48px;font-size:15.5px;line-height:15.5px;font-weight:400;color:#a19f9d;transform:scaleX(0.9509);">Rolagem Sincronizada</div>
<div class="t" style="left:1251.67px;top:154.28px;font-size:15.5px;line-height:15.5px;font-weight:400;color:#a19f9d;transform:scaleX(0.9294);">Redefinir Posição da Janela</div>
<div class="t" style="left:1205.40px;top:185.23px;font-size:13.2px;line-height:13.2px;font-weight:400;color:#444444;transform:scaleX(0.8905);">Janela</div>
<div class="t" style="left:1459.00px;top:135.28px;font-size:15.5px;line-height:15.5px;font-weight:400;color:#444444;transform:scaleX(0.9850);">Alternar</div>
<div class="t" style="left:1455.00px;top:154.98px;font-size:15.5px;line-height:15.5px;font-weight:400;color:#444444;transform:scaleX(0.8943);">Janelas</div>
<div class="t" style="left:1542.35px;top:135.28px;font-size:15.5px;line-height:15.5px;font-weight:400;color:#444444;transform:scaleX(0.9468);">Macros</div>
<div class="t" style="left:1542.98px;top:185.23px;font-size:13.2px;line-height:13.2px;font-weight:400;color:#444444;transform:scaleX(1.0155);">Macros</div>
<div class="t" style="left:13.30px;top:223.33px;font-size:14.5px;line-height:14.5px;font-weight:400;color:#222;transform:scaleX(0.9903);">A1</div>
<div class="t" style="left:88.96px;top:303.29px;font-size:20.8px;line-height:20.8px;font-weight:400;color:#fff;transform:scaleX(0.8449);">LUZ</div>
<div class="t" style="left:135.80px;top:305.90px;font-size:8.5px;line-height:8.5px;font-weight:400;color:#fff;transform:scaleX(0.9024);">Planilhas</div>
<div class="t" style="left:135.80px;top:313.70px;font-size:8.5px;line-height:8.5px;font-weight:400;color:#fff;transform:scaleX(0.9119);">Empresariais</div>
<div class="t" style="left:244.77px;top:294.36px;font-size:16px;line-height:16px;font-weight:700;color:#fff;transform:scaleX(0.9255);">PREMISSAS</div>
<div class="t" style="left:261.70px;top:317.36px;font-size:16px;line-height:16px;font-weight:700;color:#fff;transform:scaleX(0.8918);">GERAIS</div>
<div class="t" style="left:380.12px;top:305.46px;font-size:16px;line-height:16px;font-weight:700;color:#fff;transform:scaleX(0.8765);">PROJEÇÕES</div>
<div class="t" style="left:511.77px;top:305.46px;font-size:16px;line-height:16px;font-weight:700;color:#fff;transform:scaleX(0.9279);">RELATÓRIOS</div>
<div class="t" style="left:658.30px;top:305.46px;font-size:16px;line-height:16px;font-weight:700;color:#fff;transform:scaleX(0.9165);">CENÁRIOS</div>
<div class="t" style="left:779.06px;top:305.46px;font-size:16px;line-height:16px;font-weight:700;color:#fff;transform:scaleX(0.9386);">DASHBOARDS</div>
<div class="t" style="left:920.07px;top:305.46px;font-size:16px;line-height:16px;font-weight:700;color:#fff;transform:scaleX(0.9278);">INSTRUÇÕES</div>
<div class="t" style="left:289.00px;top:370.49px;font-size:16.2px;line-height:16.2px;font-weight:700;color:#fff;transform:scaleX(0.9360);">VIABILIDADE</div>
<div class="t" style="left:436.35px;top:370.49px;font-size:16.2px;line-height:16.2px;font-weight:700;color:#fff;transform:scaleX(0.9451);">DISPONIBILIDADE</div>
<div class="t" style="left:625.84px;top:370.49px;font-size:16.2px;line-height:16.2px;font-weight:700;color:#fff;transform:scaleX(0.8604);">PROJEÇÕES</div>
<div class="t" style="left:949.05px;top:370.49px;font-size:16.2px;line-height:16.2px;font-weight:700;color:#fff;transform:scaleX(0.9482);">FINANCEIRO</div>
<div class="t" style="left:794.30px;top:370.49px;font-size:16.2px;line-height:16.2px;font-weight:700;color:#404040;transform:scaleX(0.9107);">CENÁRIOS</div>
<div class="t" style="left:41.47px;top:261.16px;font-size:18px;line-height:18px;font-weight:400;color:#217346;transform:scaleX(0.8800);">A</div>
<div class="t" style="left:58.68px;top:261.16px;font-size:18px;line-height:18px;font-weight:400;color:#222;transform:scaleX(0.8800);">B</div>
<div class="t" style="left:186.08px;top:261.16px;font-size:18px;line-height:18px;font-weight:400;color:#222;transform:scaleX(0.8800);">C</div>
<div class="t" style="left:374.74px;top:261.16px;font-size:18px;line-height:18px;font-weight:400;color:#222;transform:scaleX(0.8800);">D</div>
<div class="t" style="left:512.38px;top:261.16px;font-size:18px;line-height:18px;font-weight:400;color:#222;transform:scaleX(0.8800);">E</div>
<div class="t" style="left:649.72px;top:261.16px;font-size:18px;line-height:18px;font-weight:400;color:#222;transform:scaleX(0.8800);">F</div>
<div class="t" style="left:732.28px;top:261.16px;font-size:18px;line-height:18px;font-weight:400;color:#222;transform:scaleX(0.8800);">G</div>
<div class="t" style="left:801.78px;top:261.16px;font-size:18px;line-height:18px;font-weight:400;color:#222;transform:scaleX(0.8800);">H</div>
<div class="t" style="left:948.10px;top:261.16px;font-size:18px;line-height:18px;font-weight:400;color:#222;transform:scaleX(0.8800);">I</div>
<div class="t" style="left:1089.78px;top:261.16px;font-size:18px;line-height:18px;font-weight:400;color:#222;transform:scaleX(0.8800);">J</div>
<div class="t" style="left:1157.08px;top:261.16px;font-size:18px;line-height:18px;font-weight:400;color:#222;transform:scaleX(0.8800);">K</div>
<div class="t" style="left:1227.46px;top:261.16px;font-size:18px;line-height:18px;font-weight:400;color:#222;transform:scaleX(0.8800);">L</div>
<div class="t" style="left:1368.70px;top:261.16px;font-size:18px;line-height:18px;font-weight:400;color:#222;transform:scaleX(0.8800);">M</div>
<div class="t" style="left:1512.58px;top:261.16px;font-size:18px;line-height:18px;font-weight:400;color:#222;transform:scaleX(0.8800);">N</div>
<div class="t" style="left:1581.64px;top:261.16px;font-size:18px;line-height:18px;font-weight:400;color:#222;transform:scaleX(0.8800);">O</div>
<div class="t" style="left:1651.58px;top:261.16px;font-size:18px;line-height:18px;font-weight:400;color:#222;transform:scaleX(0.8800);">P</div>
<div class="t" style="left:1794.14px;top:261.16px;font-size:18px;line-height:18px;font-weight:400;color:#222;transform:scaleX(0.8800);">Q</div>
<div style="position:absolute;left:0;top:282px;width:36px;height:64px;overflow:hidden;"><div style="position:absolute;left:0;top:-282px;"><div class="t" style="left:13.16px;top:325.36px;font-size:18px;line-height:18px;font-weight:400;color:#217346;transform:scaleX(0.8800);">1</div></div></div>
<div style="position:absolute;left:0;top:346px;width:36px;height:50px;overflow:hidden;"><div style="position:absolute;left:0;top:-346px;"><div class="t" style="left:13.60px;top:375.36px;font-size:18px;line-height:18px;font-weight:400;color:#222;transform:scaleX(0.8800);">2</div></div></div>
<div style="position:absolute;left:0;top:396px;width:36px;height:16px;overflow:hidden;"><div style="position:absolute;left:0;top:-396px;"><div class="t" style="left:13.60px;top:391.36px;font-size:18px;line-height:18px;font-weight:400;color:#222;transform:scaleX(0.8800);">3</div></div></div>
<div style="position:absolute;left:0;top:412px;width:36px;height:48px;overflow:hidden;"><div style="position:absolute;left:0;top:-412px;"><div class="t" style="left:13.60px;top:439.36px;font-size:18px;line-height:18px;font-weight:400;color:#222;transform:scaleX(0.8800);">4</div></div></div>
<div style="position:absolute;left:0;top:460px;width:36px;height:53px;overflow:hidden;"><div style="position:absolute;left:0;top:-460px;"><div class="t" style="left:13.60px;top:492.36px;font-size:18px;line-height:18px;font-weight:400;color:#222;transform:scaleX(0.8800);">5</div></div></div>
<div style="position:absolute;left:0;top:513px;width:36px;height:54px;overflow:hidden;"><div style="position:absolute;left:0;top:-513px;"><div class="t" style="left:13.60px;top:546.36px;font-size:18px;line-height:18px;font-weight:400;color:#222;transform:scaleX(0.8800);">6</div></div></div>
<div style="position:absolute;left:0;top:567px;width:36px;height:52px;overflow:hidden;"><div style="position:absolute;left:0;top:-567px;"><div class="t" style="left:13.60px;top:598.36px;font-size:18px;line-height:18px;font-weight:400;color:#222;transform:scaleX(0.8800);">7</div></div></div>
<div style="position:absolute;left:0;top:619px;width:36px;height:10px;overflow:hidden;"><div style="position:absolute;left:0;top:-619px;"><div class="t" style="left:13.60px;top:608.36px;font-size:18px;line-height:18px;font-weight:400;color:#222;transform:scaleX(0.8800);">8</div></div></div>
<div style="position:absolute;left:0;top:629px;width:36px;height:41px;overflow:hidden;"><div style="position:absolute;left:0;top:-629px;"><div class="t" style="left:13.60px;top:649.36px;font-size:18px;line-height:18px;font-weight:400;color:#222;transform:scaleX(0.8800);">9</div></div></div>
<div style="position:absolute;left:0;top:670px;width:36px;height:52px;overflow:hidden;"><div style="position:absolute;left:0;top:-670px;"><div class="t" style="left:8.76px;top:701.36px;font-size:18px;line-height:18px;font-weight:400;color:#222;transform:scaleX(0.8800);">10</div></div></div>
<div style="position:absolute;left:0;top:722px;width:36px;height:54px;overflow:hidden;"><div style="position:absolute;left:0;top:-722px;"><div class="t" style="left:9.34px;top:755.36px;font-size:18px;line-height:18px;font-weight:400;color:#222;transform:scaleX(0.8800);">11</div></div></div>
<div style="position:absolute;left:0;top:776px;width:36px;height:52px;overflow:hidden;"><div style="position:absolute;left:0;top:-776px;"><div class="t" style="left:8.76px;top:807.36px;font-size:18px;line-height:18px;font-weight:400;color:#222;transform:scaleX(0.8800);">12</div></div></div>
<div style="position:absolute;left:0;top:828px;width:36px;height:54px;overflow:hidden;"><div style="position:absolute;left:0;top:-828px;"><div class="t" style="left:8.76px;top:861.36px;font-size:18px;line-height:18px;font-weight:400;color:#222;transform:scaleX(0.8800);">13</div></div></div>
<div style="position:absolute;left:0;top:882px;width:36px;height:52px;overflow:hidden;"><div style="position:absolute;left:0;top:-882px;"><div class="t" style="left:8.76px;top:913.36px;font-size:18px;line-height:18px;font-weight:400;color:#222;transform:scaleX(0.8800);">14</div></div></div>
<div style="position:absolute;left:0;top:934px;width:36px;height:50px;overflow:hidden;"><div style="position:absolute;left:0;top:-934px;"><div class="t" style="left:8.76px;top:963.36px;font-size:18px;line-height:18px;font-weight:400;color:#222;transform:scaleX(0.8800);">15</div></div></div>
<div style="position:absolute;left:0;top:984px;width:36px;height:38px;overflow:hidden;"><div style="position:absolute;left:0;top:-984px;"><div class="t" style="left:8.76px;top:1015.36px;font-size:18px;line-height:18px;font-weight:400;color:#222;transform:scaleX(0.8800);">16</div></div></div>
<div class="t" style="left:90.20px;top:427.02px;font-size:21px;line-height:21px;font-weight:700;color:#000;transform:scaleX(0.9149);">Cenários</div>
<div class="t" style="left:330.79px;top:427.02px;font-size:21px;line-height:21px;font-weight:700;color:#000;transform:scaleX(0.9133);">Pessimista</div>
<div class="t" style="left:471.03px;top:427.02px;font-size:21px;line-height:21px;font-weight:700;color:#000;transform:scaleX(0.9735);">Projetado</div>
<div class="t" style="left:613.90px;top:427.02px;font-size:21px;line-height:21px;font-weight:700;color:#000;transform:scaleX(0.9770);">Otimista</div>
<div class="t" style="left:89.06px;top:639.42px;font-size:21px;line-height:21px;font-weight:700;color:#000;transform:scaleX(0.9433);">Indicadores</div>
<div class="t" style="left:771.00px;top:427.32px;font-size:21px;line-height:21px;font-weight:700;color:#000;transform:scaleX(0.9376);">Comparação do fluxo de caixa acumulado por cenário</div>
<div class="t" style="left:138.00px;top:479.29px;font-size:15.6px;line-height:15.6px;font-weight:400;color:#111;transform:scaleX(1.0457);">Variação nas receitas</div>
<div class="t" style="left:130.30px;top:532.79px;font-size:15.6px;line-height:15.6px;font-weight:400;color:#111;transform:scaleX(1.0146);">Variação nas despesas</div>
<div class="t" style="left:93.30px;top:585.59px;font-size:15.6px;line-height:15.6px;font-weight:400;color:#111;transform:scaleX(1.0567);">Variação nos investimentos</div>
<div class="t" style="left:367.20px;top:479.29px;font-size:15.6px;line-height:15.6px;font-weight:400;color:#fff;transform:scaleX(0.9689);">-5%</div>
<div class="t" style="left:367.20px;top:532.79px;font-size:15.6px;line-height:15.6px;font-weight:400;color:#fff;transform:scaleX(0.9689);">-3%</div>
<div class="t" style="left:367.20px;top:585.59px;font-size:15.6px;line-height:15.6px;font-weight:400;color:#fff;transform:scaleX(0.9689);">-8%</div>
<div class="t" style="left:507.10px;top:479.29px;font-size:15.6px;line-height:15.6px;font-weight:400;color:#111;transform:scaleX(0.9218);">0%</div>
<div class="t" style="left:635.10px;top:479.29px;font-size:15.6px;line-height:15.6px;font-weight:400;color:#fff;transform:scaleX(0.9715);">+10%</div>
<div class="t" style="left:507.10px;top:532.79px;font-size:15.6px;line-height:15.6px;font-weight:400;color:#111;transform:scaleX(0.9218);">0%</div>
<div class="t" style="left:635.10px;top:532.79px;font-size:15.6px;line-height:15.6px;font-weight:400;color:#fff;transform:scaleX(0.9715);">+10%</div>
<div class="t" style="left:507.10px;top:585.59px;font-size:15.6px;line-height:15.6px;font-weight:400;color:#111;transform:scaleX(0.9218);">0%</div>
<div class="t" style="left:635.10px;top:585.59px;font-size:15.6px;line-height:15.6px;font-weight:400;color:#fff;transform:scaleX(0.9715);">+10%</div>
<div class="t" style="left:267.00px;top:688.79px;font-size:15.6px;line-height:15.6px;font-weight:400;color:#111;transform:scaleX(0.8926);">VPL</div>
<div class="t" style="left:341.80px;top:688.79px;font-size:15.6px;line-height:15.6px;font-weight:400;color:#fff;transform:scaleX(1.0329);">-R$ 80.436</div>
<div class="t" style="left:480.66px;top:688.79px;font-size:15.6px;line-height:15.6px;font-weight:400;color:#111;transform:scaleX(1.0428);">R$ 26.246</div>
<div class="t" style="left:612.87px;top:688.79px;font-size:15.6px;line-height:15.6px;font-weight:400;color:#fff;transform:scaleX(1.0267);">R$ 281.360</div>
<div class="t" style="left:269.70px;top:741.99px;font-size:15.6px;line-height:15.6px;font-weight:400;color:#111;transform:scaleX(0.9615);">TIR</div>
<div class="t" style="left:351.80px;top:741.99px;font-size:15.6px;line-height:15.6px;font-weight:400;color:#fff;transform:scaleX(1.0135);">-19,83%</div>
<div class="t" style="left:492.10px;top:741.99px;font-size:15.6px;line-height:15.6px;font-weight:400;color:#111;transform:scaleX(0.9883);">22,29%</div>
<div class="t" style="left:623.26px;top:741.99px;font-size:15.6px;line-height:15.6px;font-weight:400;color:#fff;transform:scaleX(1.0363);">125,11%</div>
<div class="t" style="left:141.57px;top:794.79px;font-size:15.6px;line-height:15.6px;font-weight:400;color:#111;transform:scaleX(1.0294);">Payback Descontado</div>
<div class="t" style="left:339.93px;top:794.79px;font-size:15.6px;line-height:15.6px;font-weight:400;color:#fff;transform:scaleX(1.0711);">Não houve</div>
<div class="t" style="left:484.40px;top:794.79px;font-size:15.6px;line-height:15.6px;font-weight:400;color:#111;transform:scaleX(0.9940);">33 meses</div>
<div class="t" style="left:620.19px;top:794.79px;font-size:15.6px;line-height:15.6px;font-weight:400;color:#fff;transform:scaleX(1.0088);">16 meses</div>
<div class="t" style="left:154.95px;top:847.89px;font-size:15.6px;line-height:15.6px;font-weight:400;color:#111;transform:scaleX(1.0496);">Ponto de Equilíbrio</div>
<div class="t" style="left:345.78px;top:847.89px;font-size:15.6px;line-height:15.6px;font-weight:400;color:#fff;transform:scaleX(1.0208);">16 meses</div>
<div class="t" style="left:488.60px;top:847.89px;font-size:15.6px;line-height:15.6px;font-weight:400;color:#111;transform:scaleX(1.0045);">9 meses</div>
<div class="t" style="left:626.20px;top:847.89px;font-size:15.6px;line-height:15.6px;font-weight:400;color:#fff;transform:scaleX(0.9909);">3 meses</div>
<div class="t" style="left:213.25px;top:900.69px;font-size:15.6px;line-height:15.6px;font-weight:400;color:#111;transform:scaleX(1.0508);">Lucro Livre</div>
<div class="t" style="left:341.80px;top:900.69px;font-size:15.6px;line-height:15.6px;font-weight:400;color:#fff;transform:scaleX(1.0196);">-R$ 70.515</div>
<div class="t" style="left:480.66px;top:900.69px;font-size:15.6px;line-height:15.6px;font-weight:400;color:#111;transform:scaleX(1.0428);">R$ 80.488</div>
<div class="t" style="left:612.87px;top:900.69px;font-size:15.6px;line-height:15.6px;font-weight:400;color:#fff;transform:scaleX(1.0267);">R$ 443.485</div>
<div class="t" style="left:1658.70px;top:483.63px;font-size:13.2px;line-height:13.2px;font-weight:400;color:#595959;">R$ 443.485</div>
<div class="t" style="left:1392.28px;top:660.73px;font-size:13.2px;line-height:13.2px;font-weight:400;color:#595959;transform:scaleX(1.0156);">R$ 134.177</div>
<div class="t" style="left:1661.39px;top:692.13px;font-size:13.2px;line-height:13.2px;font-weight:400;color:#595959;transform:scaleX(1.0131);">R$ 80.488</div>
<div class="t" style="left:1410.00px;top:776.63px;font-size:13.2px;line-height:13.2px;font-weight:400;color:#595959;transform:scaleX(0.9962);">Ano 2</div>
<div class="t" style="left:1394.80px;top:780.43px;font-size:13.2px;line-height:13.2px;font-weight:400;color:#595959;">-R$ 74.248</div>
<div class="t" style="left:1675.50px;top:777.53px;font-size:13.2px;line-height:13.2px;font-weight:400;color:#595959;transform:scaleX(1.0167);">Ano 3</div>
<div class="t" style="left:1660.60px;top:792.63px;font-size:13.2px;line-height:13.2px;font-weight:400;color:#595959;transform:scaleX(0.9921);">-R$ 22.733</div>
<div class="t" style="left:1391.30px;top:844.53px;font-size:13.2px;line-height:13.2px;font-weight:400;color:#595959;transform:scaleX(1.0103);">-R$ 114.093</div>
<div class="t" style="left:1129.40px;top:757.63px;font-size:13.2px;line-height:13.2px;font-weight:400;color:#595959;transform:scaleX(0.9921);">-R$ 34.732</div>
<div class="t" style="left:1144.80px;top:777.53px;font-size:13.2px;line-height:13.2px;font-weight:400;color:#595959;transform:scaleX(1.0021);">Ano 1</div>
<div class="t" style="left:1125.30px;top:808.13px;font-size:13.2px;line-height:13.2px;font-weight:400;color:#595959;transform:scaleX(1.0049);">-R$ 124.500</div>
<div class="t" style="left:1125.30px;top:845.73px;font-size:13.2px;line-height:13.2px;font-weight:400;color:#595959;transform:scaleX(1.0187);">-R$ 115.880</div>
<div class="t" style="left:877.20px;top:776.63px;font-size:13.2px;line-height:13.2px;font-weight:400;color:#595959;transform:scaleX(1.0255);">Ano 0</div>
<div class="t" style="left:864.00px;top:783.93px;font-size:13.2px;line-height:13.2px;font-weight:400;color:#595959;">-R$ 81.000</div>
<div class="t" style="left:864.00px;top:789.73px;font-size:13.2px;line-height:13.2px;font-weight:400;color:#595959;">-R$ 90.000</div>
<div class="t" style="left:864.00px;top:834.33px;font-size:13.2px;line-height:13.2px;font-weight:400;color:#595959;">-R$ 97.200</div>
<div class="t" style="left:1089.40px;top:904.93px;font-size:13.2px;line-height:13.2px;font-weight:400;color:#595959;transform:scaleX(1.0236);">Cenário Otimista</div>
<div class="t" style="left:1254.00px;top:904.93px;font-size:13.2px;line-height:13.2px;font-weight:400;color:#595959;transform:scaleX(1.0447);">Cenário Projetado</div>
<div class="t" style="left:1426.80px;top:904.93px;font-size:13.2px;line-height:13.2px;font-weight:400;color:#595959;transform:scaleX(0.9950);">Cenário Pessimista</div>
<div class="t" style="left:79.96px;top:1025.21px;font-size:17px;line-height:17px;font-weight:400;color:#217346;transform:scaleX(1.0445);">...</div>
<div class="t" style="left:116.30px;top:1025.21px;font-size:17px;line-height:17px;font-weight:400;color:#444;transform:scaleX(0.9758);">Ano1</div>
<div class="t" style="left:182.30px;top:1025.21px;font-size:17px;line-height:17px;font-weight:400;color:#444;transform:scaleX(0.9924);">Ano2</div>
<div class="t" style="left:248.30px;top:1025.21px;font-size:17px;line-height:17px;font-weight:400;color:#444;">Ano3</div>
<div class="t" style="left:313.10px;top:1025.21px;font-size:17px;line-height:17px;font-weight:400;color:#444;transform:scaleX(0.8147);">CF</div>
<div class="t" style="left:358.06px;top:1025.21px;font-size:17px;line-height:17px;font-weight:400;color:#444;transform:scaleX(0.9416);">Rel_Viab</div>
<div class="t" style="left:449.07px;top:1025.21px;font-size:17px;line-height:17px;font-weight:400;color:#444;transform:scaleX(0.9302);">Rel_Mês</div>
<div class="t" style="left:537.09px;top:1025.21px;font-size:17px;line-height:17px;font-weight:400;color:#444;transform:scaleX(0.9061);">Rel_I</div>
<div class="t" style="left:598.00px;top:1025.21px;font-size:17px;line-height:17px;font-weight:400;color:#444;transform:scaleX(0.9429);">Cen_Ot</div>
<div class="t" style="left:679.30px;top:1025.21px;font-size:17px;line-height:17px;font-weight:400;color:#444;transform:scaleX(0.8879);">Cen_Pess</div>
<div class="t" style="left:773.34px;top:1025.21px;font-size:17px;line-height:17px;font-weight:400;color:#444;transform:scaleX(0.9631);">Dash_Viab</div>
<div class="t" style="left:880.26px;top:1025.21px;font-size:17px;line-height:17px;font-weight:400;color:#444;transform:scaleX(0.9450);">Dash_Disp</div>
<div class="t" style="left:985.04px;top:1025.21px;font-size:17px;line-height:17px;font-weight:400;color:#444;transform:scaleX(0.9601);">Dash_Proj</div>
<div class="t" style="left:1187.57px;top:1025.21px;font-size:17px;line-height:17px;font-weight:400;color:#444;transform:scaleX(0.9327);">Dash_Fin</div>
<div class="t" style="left:1280.40px;top:1025.21px;font-size:17px;line-height:17px;font-weight:400;color:#444;transform:scaleX(1.1000);">INI</div>
<div class="t" style="left:1327.53px;top:1025.21px;font-size:17px;line-height:17px;font-weight:400;color:#444;transform:scaleX(0.9704);">DUV</div>
<div class="t" style="left:1388.50px;top:1025.21px;font-size:17px;line-height:17px;font-weight:400;color:#444;transform:scaleX(0.9125);">SUG</div>
<div class="t" style="left:1445.02px;top:1025.21px;font-size:17px;line-height:17px;font-weight:400;color:#444;transform:scaleX(0.9762);">LUZ</div>
<div class="t" style="left:1086.58px;top:1025.21px;font-size:17px;line-height:17px;font-weight:700;color:#217346;transform:scaleX(0.9174);">Dash_Cen</div>
<div class="t" style="left:1879.00px;top:1058.60px;font-size:13px;line-height:13px;font-weight:400;color:#444;transform:scaleX(0.8905);">100%</div>
<svg style="position:absolute;left:0;top:0" width="1920" height="1080"><path d="M895.50 816.31 C939.88 819.61 1073.03 837.63 1161.80 836.13 C1250.57 834.62 1339.33 826.88 1428.10 807.26 C1516.87 787.63 1650.02 733.18 1694.40 718.36" fill="none" stroke="#a5a5a5" stroke-width="2.8" stroke-linecap="round"/><path d="M895.50 820.44 C939.88 822.23 1073.03 829.56 1161.80 831.17 C1250.57 832.79 1339.33 839.07 1428.10 830.15 C1516.87 821.23 1650.02 786.41 1694.40 777.66" fill="none" stroke="#ee4433" stroke-width="2.8" stroke-linecap="round"/><path d="M895.50 811.13 C939.88 806.70 1073.03 805.16 1161.80 784.55 C1250.57 763.95 1339.33 733.30 1428.10 687.52 C1516.87 641.73 1650.02 539.43 1694.40 509.82" fill="none" stroke="#5bb043" stroke-width="2.8" stroke-linecap="round"/></svg>
</body></html>
